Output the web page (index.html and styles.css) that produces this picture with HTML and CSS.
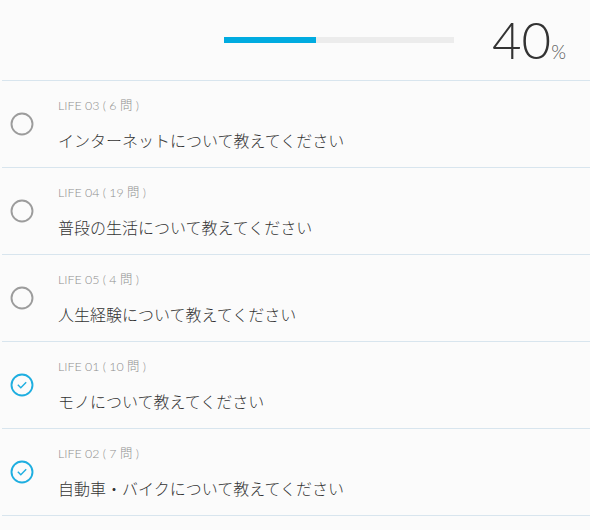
FILE: index.html
```html
<!DOCTYPE html>
<html lang="ja">
<head>
  <meta charset="UTF-8" />
  <meta name="viewport" content="width=device-width, initial-scale=1.0"/>
  <title>LIFE</title>
  <link rel="stylesheet" href="styles.css">
</head>
<body>
  <div class="progress-head">
    <div class="bar"><div class="bar-fill" style="width: 40%"></div></div>
    <div class="percent">40<span>%</span></div>
  </div>

  <ul class="topics">
    <li class="topic">
      <svg class="mark" viewBox="0 0 24 24"><circle cx="12" cy="12" r="10.5" /></svg>
      <div class="topic-body">
        <p class="topic-label">LIFE 03 ( 6 問 )</p>
        <p class="topic-title">インターネットについて教えてください</p>
      </div>
    </li>
    <li class="topic">
      <svg class="mark" viewBox="0 0 24 24"><circle cx="12" cy="12" r="10.5" /></svg>
      <div class="topic-body">
        <p class="topic-label">LIFE 04 ( 19 問 )</p>
        <p class="topic-title">普段の生活について教えてください</p>
      </div>
    </li>
    <li class="topic">
      <svg class="mark" viewBox="0 0 24 24"><circle cx="12" cy="12" r="10.5" /></svg>
      <div class="topic-body">
        <p class="topic-label">LIFE 05 ( 4 問 )</p>
        <p class="topic-title">人生経験について教えてください</p>
      </div>
    </li>
    <li class="topic done">
      <svg class="mark" viewBox="0 0 24 24"><circle cx="12" cy="12" r="10.5" /><path d="M7.8 11.8 L10.8 14.8 L16.2 9.2" /></svg>
      <div class="topic-body">
        <p class="topic-label">LIFE 01 ( 10 問 )</p>
        <p class="topic-title">モノについて教えてください</p>
      </div>
    </li>
    <li class="topic done">
      <svg class="mark" viewBox="0 0 24 24"><circle cx="12" cy="12" r="10.5" /><path d="M7.8 11.8 L10.8 14.8 L16.2 9.2" /></svg>
      <div class="topic-body">
        <p class="topic-label">LIFE 02 ( 7 問 )</p>
        <p class="topic-title">自動車・バイクについて教えてください</p>
      </div>
    </li>
  </ul>
</body>
</html>
```

FILE: styles.css
```css
body {
  margin: 0;
  background: #fbfbfb;
  font-family: Lato, "Noto Sans CJK JP", sans-serif;
  color: #444;
}
.progress-head {
  display: flex;
  align-items: center;
  height: 81px;
  margin-left: 2px;
  padding-left: 222px;
  border-bottom: 1px solid #d8e5ee;
  box-sizing: border-box;
}
.bar {
  width: 230px;
  height: 6px;
  background: #ececec;
}
.bar-fill {
  height: 100%;
  background: #00abe0;
}
.percent {
  margin-left: 38px;
  margin-top: -2px;
  font-size: 51px;
  font-weight: 300;
  line-height: 1;
  color: #333;
}
.percent span {
  font-size: 19px;
  margin-left: 0;
  color: #555;
}
.topics {
  list-style: none;
  margin: 0 0 0 2px;
  padding: 0;
}
.topic {
  display: flex;
  align-items: center;
  height: 87px;
  border-bottom: 1px solid #d8e5ee;
  box-sizing: border-box;
}
.mark {
  width: 24px;
  height: 24px;
  margin-left: 8px;
  margin-right: 24px;
  fill: none;
  stroke: #9c9c9c;
  stroke-width: 1.9;
}
.done .mark {
  stroke: #1eaee0;
}
.done .mark path {
  stroke-width: 1.4;
}
.topic-body p {
  margin: 0;
}
.topic-label {
  font-size: 12.4px;
  font-weight: 300;
  color: #8e8e8e;
  margin-top: 0 !important;
}
.topic-title {
  font-size: 16px;
  font-weight: 300;
  color: #333;
  margin-top: 14px !important;
}
```
